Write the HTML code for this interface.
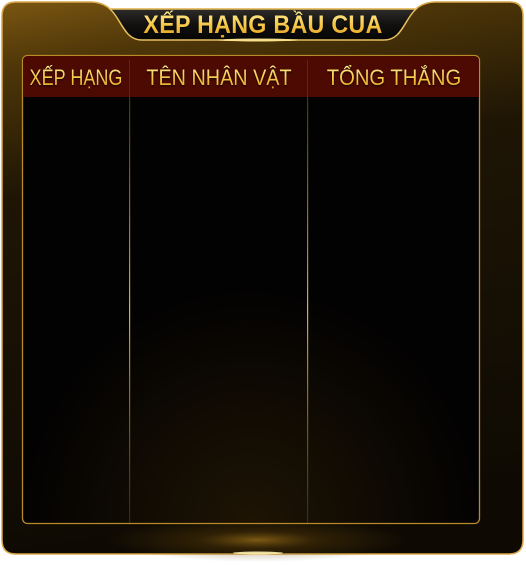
<!DOCTYPE html>
<html><head><meta charset="utf-8"><style>
html,body{margin:0;padding:0;background:#fff;width:526px;height:565px;overflow:hidden}
.w{position:relative;width:526px;height:565px}
svg{position:absolute;left:0;top:0}
.t{position:absolute;font-family:"Liberation Sans","DejaVu Sans",sans-serif;color:#f7c64a;white-space:nowrap;text-align:center;
background:linear-gradient(#fff0a0,#f6c440 55%,#d8901c);-webkit-background-clip:text;background-clip:text;-webkit-text-fill-color:transparent;
filter:drop-shadow(0 1px 1px rgba(0,0,0,.8))}
.title{left:100px;width:326px;top:9px;font-size:25px;font-weight:bold;line-height:32px;letter-spacing:0.3px;transform:scaleX(0.93)}
.h{top:63px;font-size:22px;line-height:30px}
</style></head><body><div class="w">
<svg width="526" height="565" viewBox="0 0 526 565">
<defs>
<linearGradient id="fr" x1="0" y1="0" x2="0.15" y2="1">
<stop offset="0" stop-color="#7a5612"/><stop offset="0.12" stop-color="#4e3608"/><stop offset="0.35" stop-color="#1e1505"/><stop offset="1" stop-color="#0e0a03"/></linearGradient>
<radialGradient id="bg" cx="0.5" cy="1" r="0.5">
<stop offset="0" stop-color="#1e1404"/><stop offset="1" stop-color="#030202"/></radialGradient>
<radialGradient id="glow" cx="0.5" cy="0.5" r="0.5">
<stop offset="0" stop-color="#c89020"/><stop offset="0.4" stop-color="#6a4808" stop-opacity="0.6"/><stop offset="1" stop-color="#6a4808" stop-opacity="0"/></radialGradient>
<linearGradient id="bn" x1="0" y1="0" x2="0" y2="1"><stop offset="0" stop-color="#2e2c28"/><stop offset="0.5" stop-color="#121110"/><stop offset="1" stop-color="#050505"/></linearGradient>
<linearGradient id="vl" x1="0" y1="0" x2="0" y2="1"><stop offset="0" stop-color="#8a6a20" stop-opacity="0.5"/><stop offset="0.5" stop-color="#e0b040"/><stop offset="1" stop-color="#8a6a20" stop-opacity="0.3"/></linearGradient>
</defs>
<path d="M2,16 Q2,2 16,2 L90,2 Q102,2 110,9 L416,9 Q424,2 436,2 L510,2 Q523,2 523,16 L523,540 Q523,554 509,554 L16,554 Q2,554 2,540 Z" fill="url(#fr)" stroke="#d8a848" stroke-width="1.5"/>
<ellipse cx="258" cy="540" rx="150" ry="22" fill="url(#glow)" opacity="0.6"/>
<ellipse cx="258" cy="553" rx="25" ry="1.5" fill="#fff2b0" opacity="0.9"/>
<path d="M110,9 L416,9 C404,20 402,40 384,40 L142,40 C124,40 122,20 110,9 Z" fill="url(#bn)" stroke="#e8c060" stroke-width="1.5"/>
<ellipse cx="258" cy="40" rx="40" ry="1.5" fill="#ffe890" opacity="0.9"/>
<rect x="22.5" y="55.5" width="457" height="468" rx="5" fill="url(#bg)" stroke="#b88a28" stroke-width="1.3"/>
<path d="M23,97 L23,61 Q23,56 28,56 L474,56 Q479,56 479,61 L479,97 Z" fill="#4c0a02"/>
<rect x="129" y="97" width="1.2" height="426" fill="url(#vl)"/>
<rect x="307" y="97" width="1.2" height="426" fill="url(#vl)"/>
<rect x="129" y="60" width="1" height="37" fill="#6a2010"/>
<rect x="307" y="60" width="1" height="37" fill="#6a2010"/>
</svg>
<div class="t title">XẾP HẠNG BẦU CUA</div>
<div class="t h" style="left:6px;width:140px;transform:scaleX(0.82)">XẾP HẠNG</div>
<div class="t h" style="left:119px;width:200px;transform:scaleX(0.9)">TÊN NHÂN VẬT</div>
<div class="t h" style="left:294px;width:200px;transform:scaleX(0.92)">TỔNG THẮNG</div>
</div></body></html>
